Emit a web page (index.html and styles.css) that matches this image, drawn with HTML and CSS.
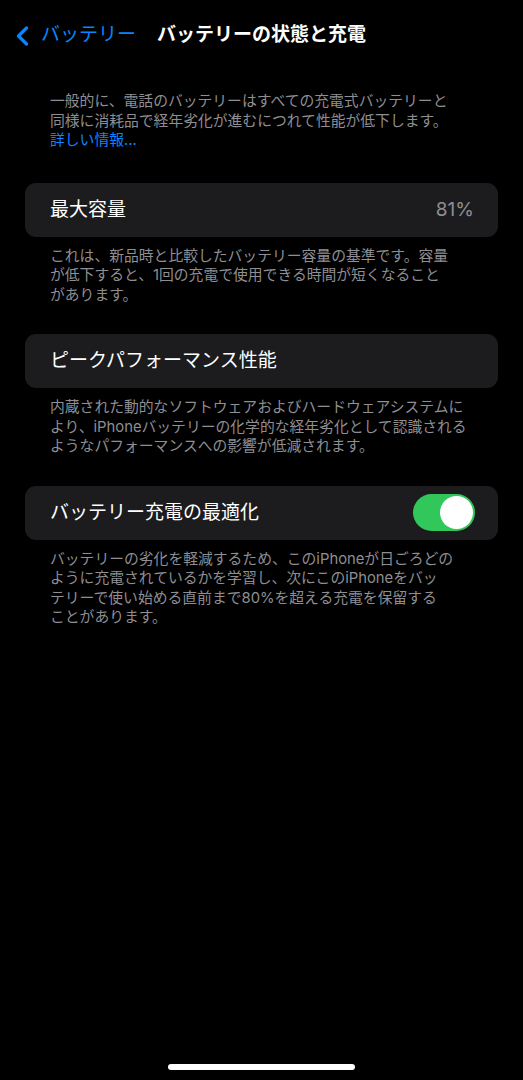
FILE: index.html
```html
<!DOCTYPE html>
<html lang="ja">
<head>
<meta charset="utf-8">
<title>バッテリーの状態と充電</title>
<link rel="stylesheet" href="styles.css">
</head>
<body>
<div class="screen">
  <header class="nav">
    <div class="back">
      <svg class="chevron" width="14" height="20" viewBox="0 0 14 20">
        <path d="M11.5 2 L3.5 10 L11.5 18" fill="none" stroke="#0a84ff" stroke-width="3.2" stroke-linecap="round" stroke-linejoin="round"/>
      </svg>
      <span class="back-label">バッテリー</span>
    </div>
    <h1 class="title">バッテリーの状態と充電</h1>
    <div></div>
  </header>

  <main class="content">
    <p class="intro">一般的に、電話のバッテリーはすべての充電式バッテリーと<br>同様に消耗品で経年劣化が進むにつれて性能が低下します。<br><span class="link">詳しい情報...</span></p>

    <section class="group">
      <div class="card">
        <span class="label">最大容量</span>
        <span class="value">81%</span>
      </div>
      <p class="footer">これは、新品時と比較したバッテリー容量の基準です。容量<br>が低下すると、1回の充電で使用できる時間が短くなること<br>があります。</p>
    </section>

    <section class="group">
      <div class="card">
        <span class="label">ピークパフォーマンス性能</span>
      </div>
      <p class="footer">内蔵された動的なソフトウェアおよびハードウェアシステムに<br>より、iPhoneバッテリーの化学的な経年劣化として認識される<br>ようなパフォーマンスへの影響が低減されます。</p>
    </section>

    <section class="group">
      <div class="card">
        <span class="label">バッテリー充電の最適化</span>
        <span class="toggle"><span class="knob"></span></span>
      </div>
      <p class="footer">バッテリーの劣化を軽減するため、このiPhoneが日ごろどの<br>ように充電されているかを学習し、次にこのiPhoneをバッ<br>テリーで使い始める直前まで80%を超える充電を保留する<br>ことがあります。</p>
    </section>
  </main>

  <div class="home-bar"></div>
</div>
</body>
</html>
```

FILE: styles.css
```css
html, body {
  margin: 0;
  padding: 0;
  background: #000;
}

body {
  font-family: "Inter", "Noto Sans CJK JP", sans-serif;
  color: #fff;
}

.screen {
  width: 523px;
  height: 1080px;
  display: flex;
  flex-direction: column;
  overflow: hidden;
}

.nav {
  height: 70px;
  display: grid;
  grid-template-columns: 1fr auto 1fr;
  align-items: center;
}

.back {
  display: flex;
  align-items: center;
  padding-left: 15px;
  gap: 12px;
  color: #0a84ff;
}

.chevron {
  display: block;
  margin-top: 1px;
}

.back-label {
  font-size: 19px;
  line-height: 24px;
  white-space: nowrap;
}

.title {
  margin: 0;
  font-size: 19px;
  line-height: 24px;
  font-weight: 700;
  white-space: nowrap;
}

.content {
  flex: 1;
  padding: 22px 25px 0 25px;
}

.intro {
  margin: 0 0 32px 0;
  padding-left: 25px;
  font-size: 14.8px;
  line-height: 19.5px;
  color: #8e8e93;
  white-space: nowrap;
}

.link {
  color: #0a84ff;
}

.group {
  margin-bottom: 29px;
}

.card {
  height: 54px;
  background: #1c1c1e;
  border-radius: 11px;
  padding: 0 24px 0 25px;
  display: flex;
  align-items: center;
  justify-content: space-between;
}

.label {
  font-size: 19px;
  line-height: 24px;
  color: #fff;
  white-space: nowrap;
}

.value {
  font-size: 19px;
  line-height: 24px;
  color: #8e8e93;
}

.toggle {
  width: 62px;
  height: 37px;
  border-radius: 19px;
  background: #32c75a;
  display: flex;
  align-items: center;
  justify-content: flex-end;
  padding: 0 2px;
  box-sizing: border-box;
  margin-right: -1px;
}

.knob {
  width: 33px;
  height: 33px;
  border-radius: 50%;
  background: #fff;
}

.footer {
  margin: 10px 0 0 0;
  padding-left: 25px;
  font-size: 14.8px;
  line-height: 19.5px;
  color: #8e8e93;
  white-space: nowrap;
}

.home-bar {
  align-self: center;
  width: 187px;
  height: 6px;
  border-radius: 3px;
  background: #fff;
  margin-bottom: 10px;
}
```
